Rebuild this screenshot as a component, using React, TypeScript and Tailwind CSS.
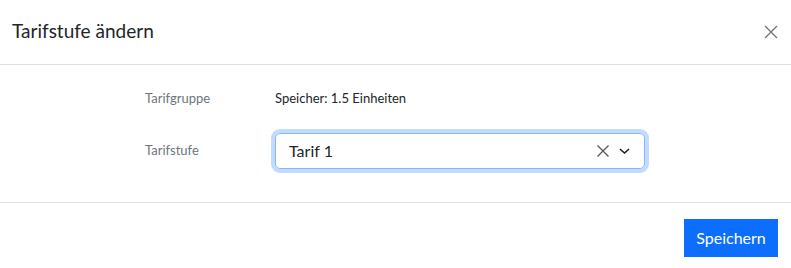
export default function App() {
  return (
    <div className="w-[791px] h-[268px] bg-white font-['Lato','Liberation_Sans',sans-serif] text-[#212529]">
      <header className="h-[65px] border-b border-[#dee2e6] flex items-center justify-between pl-3 pr-[13px] pb-1">
        <h1 className="text-[19px] leading-none">Tarifstufe ändern</h1>
        <button className="w-[14px] h-[14px] flex items-center justify-center mt-1">
          <svg width="14" height="14" viewBox="0 0 14 14" fill="none" stroke="#6c757d" strokeWidth="1.3">
            <path d="M1 1L13 13M13 1L1 13" />
          </svg>
        </button>
      </header>

      <div className="border-b border-[#dee2e6] pt-4 pb-[33px] pl-[145px] flex flex-col gap-4">
        <div className="flex items-center h-9">
          <span className="w-[130px] text-[13px] text-[#6c757d]">Tarifgruppe</span>
          <span className="text-[13px]">Speicher: 1.5 Einheiten</span>
        </div>
        <div className="flex items-center h-9">
          <span className="w-[130px] text-[13px] text-[#6c757d]">Tarifstufe</span>
          <div className="w-[370px] h-9 rounded-[5px] border border-[#86b7fe] shadow-[0_0_0_4px_rgba(13,110,253,0.25)] flex items-center pl-[13px] pr-[14px]">
            <span className="flex-1 text-[16px]">Tarif 1</span>
            <svg width="12" height="12" viewBox="0 0 12 12" fill="none" stroke="#555" strokeWidth="1.3">
              <path d="M0.5 0.5L11.5 11.5M11.5 0.5L0.5 11.5" />
            </svg>
            <svg className="ml-[10px]" width="11" height="6" viewBox="0 0 11 6" fill="none" stroke="#212529" strokeWidth="1.6">
              <path d="M1 1L5.5 5L10 1" />
            </svg>
          </div>
        </div>
      </div>

      <footer className="flex justify-end pt-4 pr-[13px]">
        <button className="w-[94px] h-[38px] bg-[#0d6efd] text-white text-[16px]">Speichern</button>
      </footer>
    </div>
  )
}
